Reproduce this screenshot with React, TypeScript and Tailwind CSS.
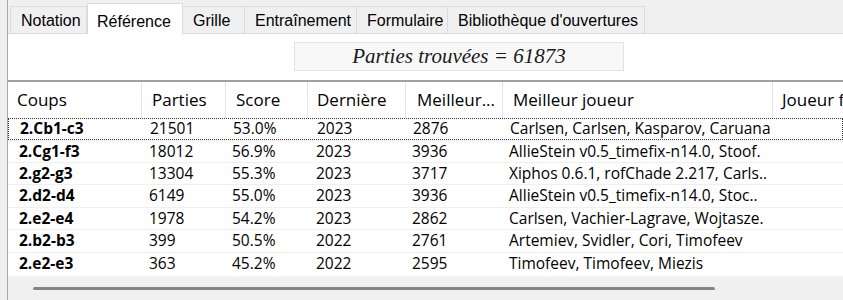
import React from "react";

const tabs = [
  { label: "Notation", w: 77 },
  { label: "Référence", w: 96, active: true },
  { label: "Grille", w: 62 },
  { label: "Entraînement", w: 112 },
  { label: "Formulaire", w: 91 },
  { label: "Bibliothèque d'ouvertures", w: 197 },
];

const cols = [
  { name: "Coups", w: 134, pl: 9 },
  { name: "Parties", w: 84, pl: 10 },
  { name: "Score", w: 82, pl: 10 },
  { name: "Dernière", w: 98, pl: 9 },
  { name: "Meilleur...", w: 97, pl: 11 },
  { name: "Meilleur joueur", w: 270, pl: 10 },
  { name: "Joueur f", w: 120, pl: 9 },
];

const rows = [
  ["2.Cb1-c3", "21501", "53.0%", "2023", "2876", "Carlsen, Carlsen, Kasparov, Caruana"],
  ["2.Cg1-f3", "18012", "56.9%", "2023", "3936", "AllieStein v0.5_timefix-n14.0, Stoof."],
  ["2.g2-g3", "13304", "55.3%", "2023", "3717", "Xiphos 0.6.1, rofChade 2.217, Carls.."],
  ["2.d2-d4", "6149", "55.0%", "2023", "3936", "AllieStein v0.5_timefix-n14.0, Stoc.."],
  ["2.e2-e4", "1978", "54.2%", "2023", "2862", "Carlsen, Vachier-Lagrave, Wojtasze."],
  ["2.b2-b3", "399", "50.5%", "2022", "2761", "Artemiev, Svidler, Cori, Timofeev"],
  ["2.e2-e3", "363", "45.2%", "2022", "2595", "Timofeev, Timofeev, Miezis"],
];

const rowH = [22, 22, 22, 23, 22, 23, 22];

export default function App() {
  return (
    <div className="w-[843px] h-[300px] bg-[#f0f0f0] flex overflow-hidden">
      <div className="w-[7px] shrink-0" />
      <div className="flex-1 border-l border-[#a8a8a8] flex flex-col min-w-0">
        {/* Tabs */}
        <div className="h-[33px] flex items-end pl-[2px] font-['Liberation_Sans',Arial,sans-serif] text-[16px] text-black shrink-0">
          {tabs.map((t) =>
            t.active ? (
              <div
                key={t.label}
                style={{ width: t.w }}
                className="h-[31px] bg-white border-t border-x border-[#dadada] flex items-start pt-[6px] pl-[9px] -mb-px relative z-10"
              >
                {t.label}
              </div>
            ) : (
              <div
                key={t.label}
                style={{ width: t.w }}
                className="h-[27px] bg-[#f0f0f0] border-t border-r border-[#dcdcdc] first:border-l flex items-center pl-[10px] pt-[1px]"
              >
                {t.label}
              </div>
            )
          )}
        </div>
        {/* Panel */}
        <div className="flex-1 bg-white border-t border-[#dadada] flex flex-col min-h-0">
          <div className="h-[46px] shrink-0 flex items-start pt-[8px] pl-[286px]">
            <div className="w-[330px] h-[29px] bg-[#f8f8f8] border border-[#e2e2e2] flex items-center justify-center font-['Liberation_Serif',serif] italic text-[21px] text-[#1a1a1a] leading-none">
              Parties trouvées = 61873
            </div>
          </div>
          {/* List view */}
          <div className="flex-1 border-t-2 border-[#a0a0a0] flex flex-col min-h-0 font-['Open_Sans',sans-serif] text-[15.5px] text-black">
            <div className="h-[36px] shrink-0 flex bg-white text-[17px]">
              {cols.map((c) => (
                <div
                  key={c.name}
                  style={{ width: c.w, paddingLeft: c.pl }}
                  className="shrink-0 flex items-center whitespace-nowrap border-r border-[#e5e5e5]"
                >
                  {c.name}
                </div>
              ))}
            </div>
            {rows.map((r, ri) => (
              <div
                key={ri}
                style={{ height: rowH[ri] }}
                className={
                  "shrink-0 flex items-center whitespace-nowrap leading-none " +
                  (ri === 0
                    ? "border border-dotted border-[#333]"
                    : "border-t border-[#f0f0f0]")
                }
              >
                <div className="w-[134px] shrink-0 pl-[11px] font-bold">{r[0]}</div>
                <div className="w-[84px] shrink-0 pl-[7px]">{r[1]}</div>
                <div className="w-[82px] shrink-0 pl-[6px]">{r[2]}</div>
                <div className="w-[98px] shrink-0 pl-[8px]">{r[3]}</div>
                <div className="w-[97px] shrink-0 pl-[6px]">{r[4]}</div>
                <div className="w-[270px] shrink-0 pl-[6px]">{r[5]}</div>
              </div>
            ))}
            <div className="h-[3px] shrink-0 bg-white border-b border-[#f3f3f3]" />
            <div className="flex-1 bg-[#f0f0f0] flex items-center pl-[25px]">
              <div className="w-[682px] h-[3px] rounded-full bg-[#858585]" />
            </div>
          </div>
        </div>
      </div>
    </div>
  );
}
